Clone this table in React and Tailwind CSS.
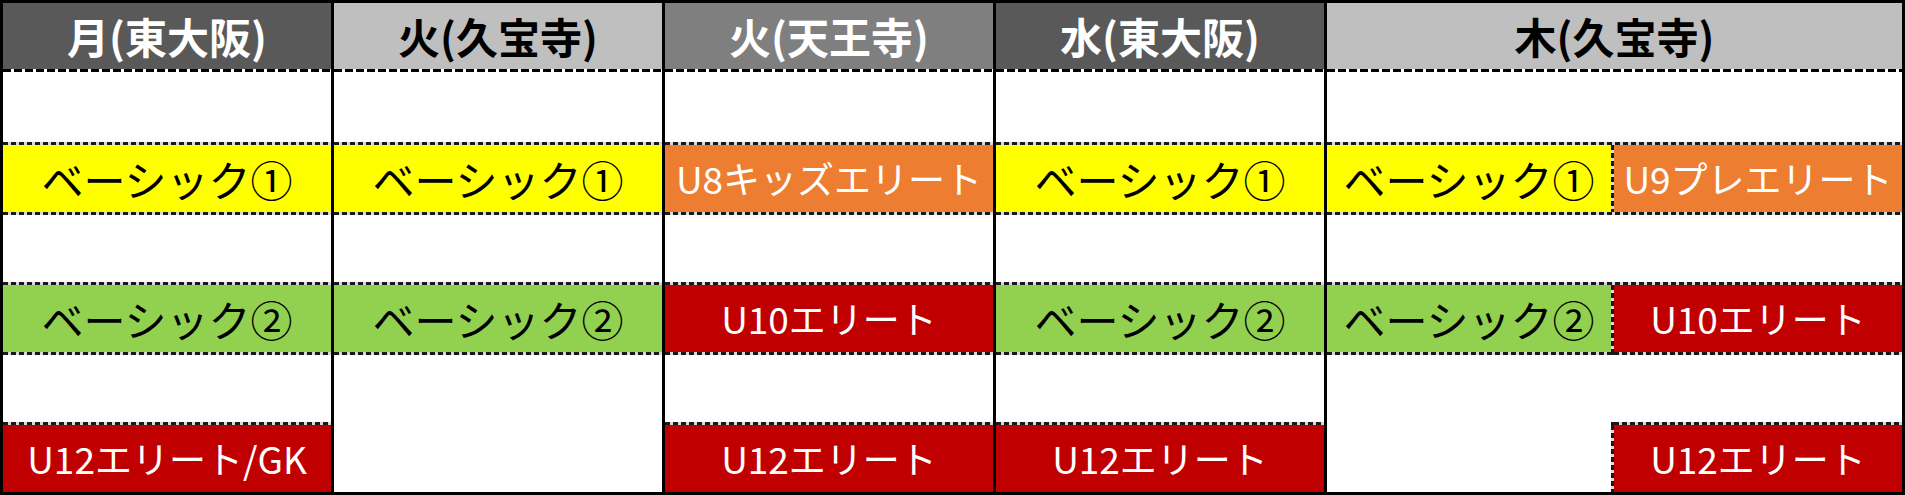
import React from 'react';

// dashed separators drawn like the spreadsheet's hairline dashes
const dashHead = 'h-[3px] shrink-0 bg-[repeating-linear-gradient(90deg,#000_0_8px,#fff_8px_11px)]';
const dashRow = 'h-[3px] shrink-0 bg-[repeating-linear-gradient(90deg,#1a1a1a_0_5px,#d9d9d9_5px_8px)]';
const dashCol = 'w-[3px] shrink-0 bg-[repeating-linear-gradient(180deg,#1a1a1a_0_5px,#d9d9d9_5px_8px)]';

const tones = {
  white: 'bg-white',
  yellow: 'bg-[#ffff00] text-black text-[42px]',
  green: 'bg-[#92d050] text-black text-[42px]',
  orange: 'bg-[#ed7d31] text-white text-[37px]',
  red: 'bg-[#c00000] text-white text-[37px]',
};

const Header = ({ label, dark, mid }) => (
  <div className="flex flex-col h-[69px] shrink-0">
    <div
      className={`flex-1 flex items-center justify-center text-[42px] font-bold leading-none [font-feature-settings:"palt"] ${
        dark ? 'bg-[#595959] text-white' : mid ? 'bg-[#7f7f7f] text-white' : 'bg-[#bfbfbf] text-black'
      }`}
    >
      {label}
    </div>
    <div className={dashHead} />
  </div>
);

const Cell = ({ tone = 'white', text, top = true, tall }) => (
  <div className={`flex flex-col shrink-0 ${tall ? 'h-[140px]' : 'h-[70px]'}`}>
    {top && <div className={dashRow} />}
    <div className={`flex-1 flex items-center justify-center leading-none whitespace-nowrap ${tones[tone]}`}>
      {text}
    </div>
  </div>
);

const Column = ({ head, cells, className = '' }) => (
  <div className={`flex flex-col ${className}`}>
    <Header {...head} />
    {cells.map((c, i) => (
      <Cell key={i} {...c} top={i > 0 && c.top !== false} />
    ))}
  </div>
);

const SplitRow = ({ left, right }) => (
  <div className="flex flex-col h-[70px] shrink-0">
    <div className={dashRow} />
    <div className="flex-1 flex">
      <div className={`w-[284px] flex items-center justify-center leading-none whitespace-nowrap ${tones[left.tone]}`}>
        {left.text}
      </div>
      <div className={dashCol} />
      <div className={`flex-1 flex items-center justify-center leading-none whitespace-nowrap ${tones[right.tone]}`}>
        {right.text}
      </div>
    </div>
  </div>
);

const b1 = 'ベーシック①';
const b2 = 'ベーシック②';

export default function App() {
  return (
    <div className="w-[1905px] bg-white font-['Noto_Sans_CJK_JP',sans-serif]">
      <div className="flex border-[3px] border-black">
        <Column
          className="w-[328px]"
          head={{ label: '月(東大阪)', dark: true }}
          cells={[
            {},
            { tone: 'yellow', text: b1 },
            {},
            { tone: 'green', text: b2 },
            {},
            { tone: 'red', text: 'U12エリート/GK' },
          ]}
        />
        <Column
          className="w-[331px] border-l-[3px] border-black"
          head={{ label: '火(久宝寺)' }}
          cells={[
            {},
            { tone: 'yellow', text: b1 },
            {},
            { tone: 'green', text: b2 },
            { tall: true },
          ]}
        />
        <Column
          className="w-[331px] border-l-[3px] border-black"
          head={{ label: '火(天王寺)', mid: true }}
          cells={[
            {},
            { tone: 'orange', text: 'U8キッズエリート' },
            {},
            { tone: 'red', text: 'U10エリート' },
            {},
            { tone: 'red', text: 'U12エリート' },
          ]}
        />
        <Column
          className="w-[331px] border-l-[3px] border-black"
          head={{ label: '水(東大阪)', dark: true }}
          cells={[
            {},
            { tone: 'yellow', text: b1 },
            {},
            { tone: 'green', text: b2 },
            {},
            { tone: 'red', text: 'U12エリート' },
          ]}
        />
        <div className="flex-1 flex flex-col border-l-[3px] border-black">
          <Header label="木(久宝寺)" />
          <Cell top={false} />
          <SplitRow left={{ tone: 'yellow', text: b1 }} right={{ tone: 'orange', text: 'U9プレエリート' }} />
          <Cell />
          <SplitRow left={{ tone: 'green', text: b2 }} right={{ tone: 'red', text: 'U10エリート' }} />
          <div className="flex h-[140px]">
            <div className="w-[284px] flex flex-col">
              <div className={dashRow} />
              <div className="flex-1 bg-white" />
            </div>
            <div className="w-[3px] flex flex-col">
              <div className={dashRow} />
              <div className="h-[67px] bg-white" />
              <div className={dashRow} />
              <div className={`flex-1 ${dashCol}`} />
            </div>
            <div className="flex-1 flex flex-col">
              <div className={dashRow} />
              <div className="h-[67px] bg-white" />
              <div className={dashRow} />
              <div className="flex-1 flex items-center justify-center leading-none whitespace-nowrap bg-[#c00000] text-white text-[37px]">
                U12エリート
              </div>
            </div>
          </div>
        </div>
      </div>
    </div>
  );
}
